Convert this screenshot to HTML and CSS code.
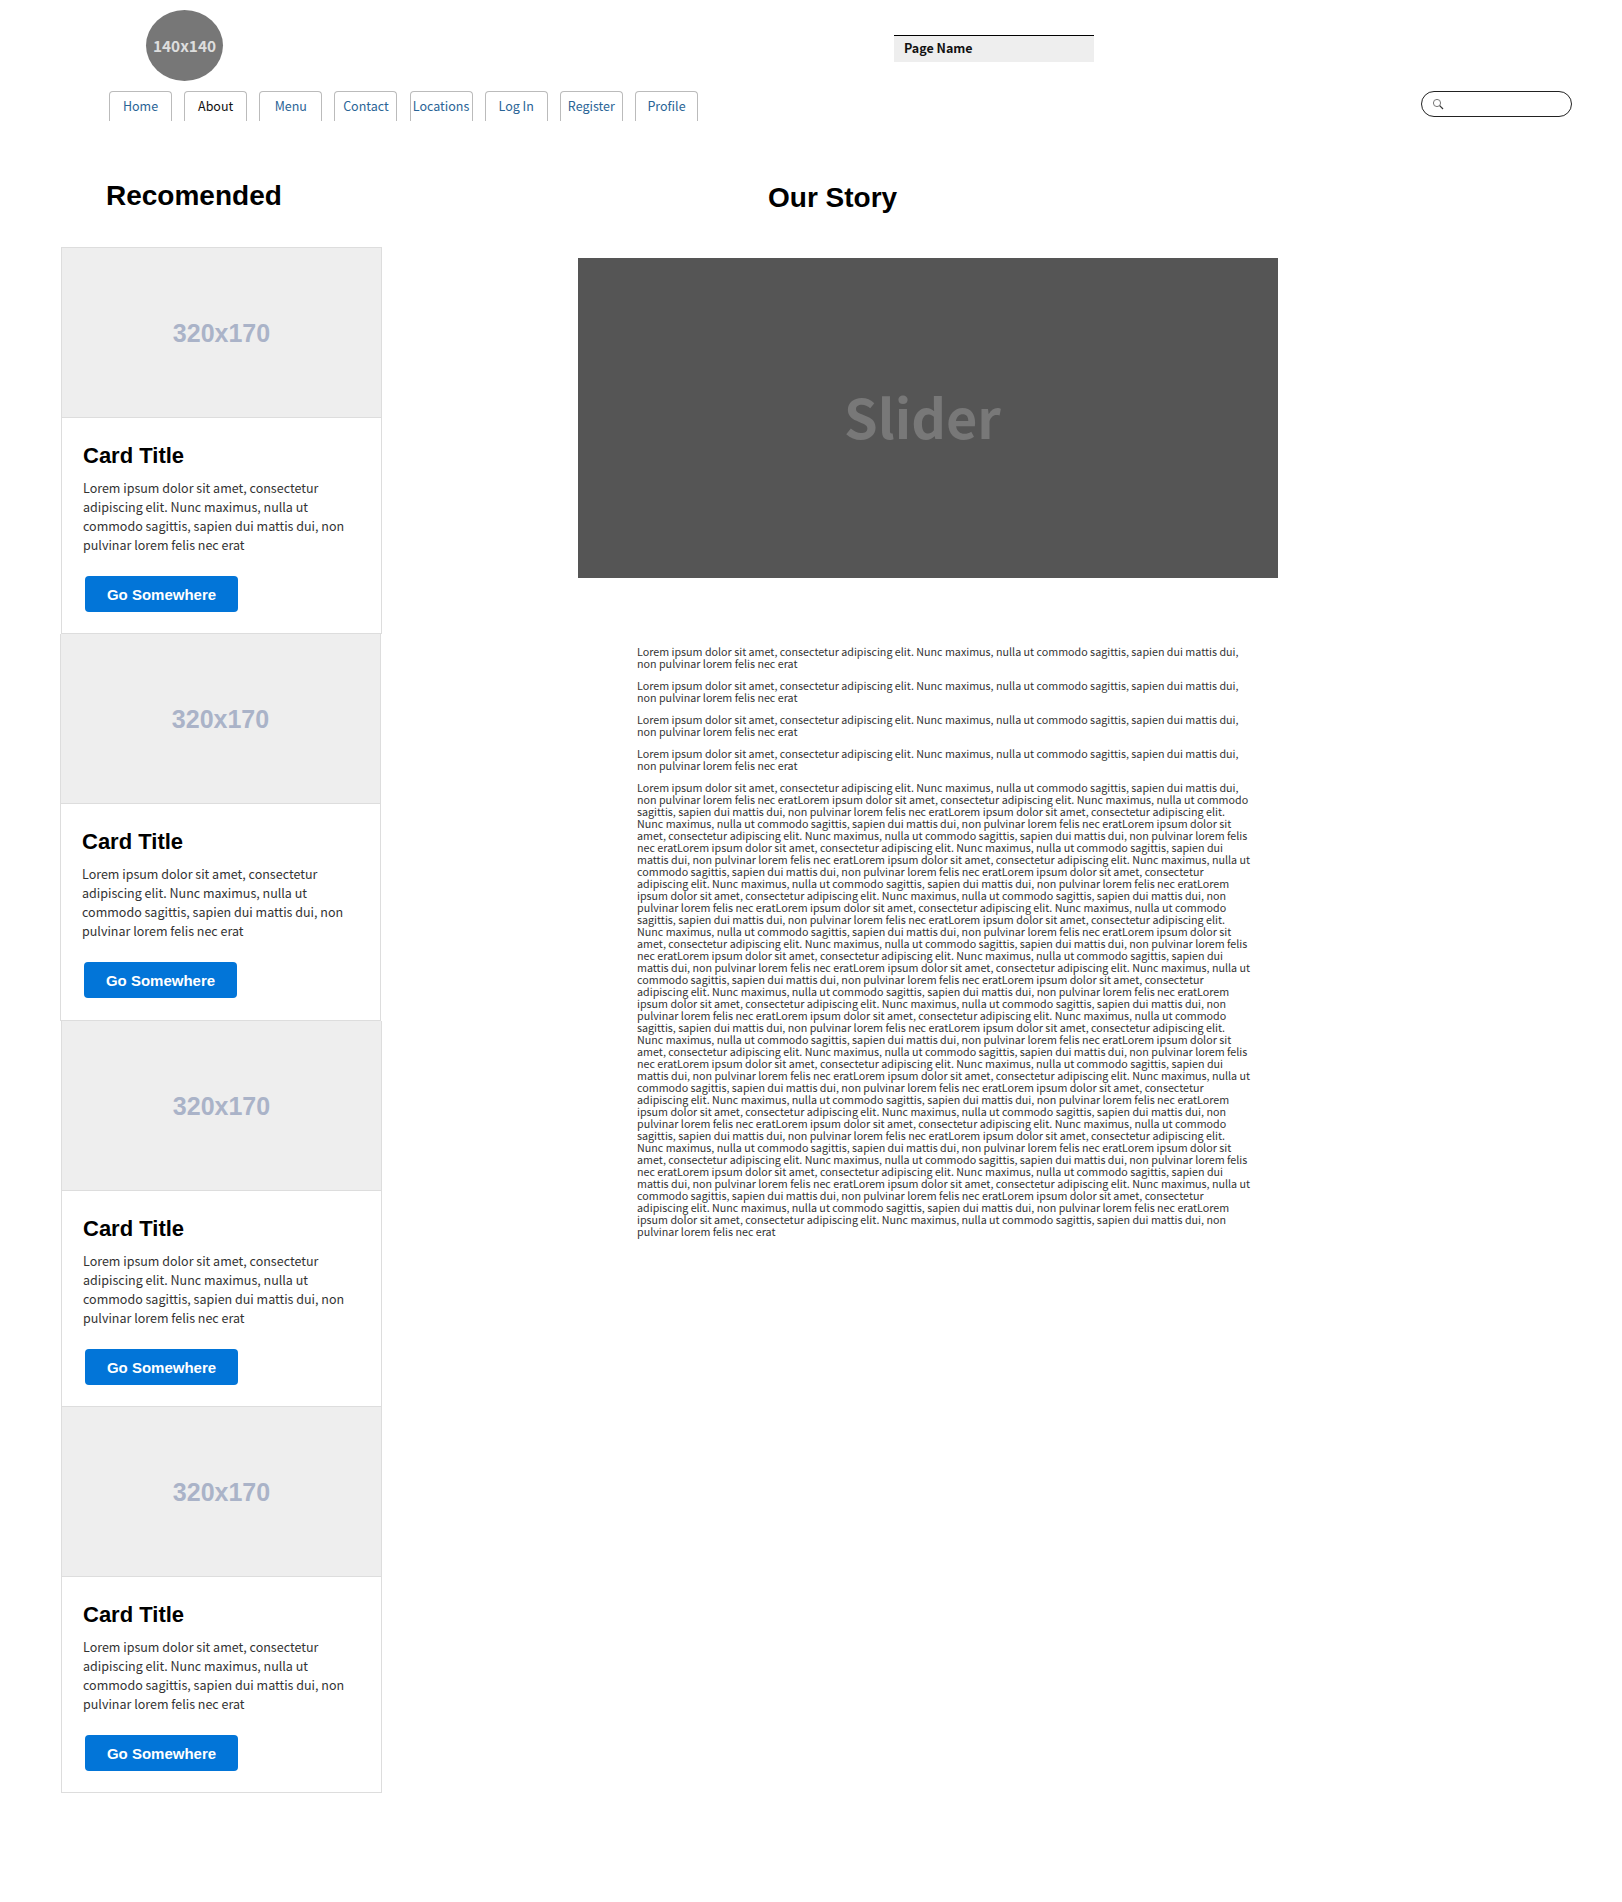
FILE: index.html
```html
<!DOCTYPE html>
<html lang="en">
<head>
  <meta charset="UTF-8" />
  <meta name="viewport" content="width=device-width, initial-scale=1.0"/>
  <title>Our Story</title>
  <link rel="stylesheet" href="styles.css">
</head>
<body>

  <div class="top-row">
    <div class="logo">140x140</div>
    <div class="page-name">Page Name</div>
  </div>

  <div class="nav-row">
    <ul class="tabs">
      <li><a href="#">Home</a></li>
      <li><a href="#" class="active">About</a></li>
      <li><a href="#">Menu</a></li>
      <li><a href="#">Contact</a></li>
      <li><a href="#">Locations</a></li>
      <li><a href="#">Log In</a></li>
      <li><a href="#">Register</a></li>
      <li><a href="#">Profile</a></li>
    </ul>
    <div class="search">
      <svg class="search-icon" width="12" height="12" viewBox="0 0 12 12">
        <circle cx="5" cy="5" r="3.6" fill="none" stroke="#777" stroke-width="1"/>
        <path d="M7.7 7.7 L11 11" stroke="#333" stroke-width="1.2" fill="none"/>
      </svg>
      <input type="text" />
    </div>
  </div>

  <div class="content">
    <div class="sidebar">
      <h2 class="side-title">Recomended</h2>

      <div class="card">
        <div class="card-img">320x170</div>
        <div class="card-body">
          <h4>Card Title</h4>
          <p>Lorem ipsum dolor sit amet, consectetur adipiscing elit. Nunc maximus, nulla ut commodo sagittis, sapien dui mattis dui, non pulvinar lorem felis nec erat</p>
          <a href="#" class="btn">Go Somewhere</a>
        </div>
      </div>

      <div class="card card-shift">
        <div class="card-img">320x170</div>
        <div class="card-body">
          <h4>Card Title</h4>
          <p>Lorem ipsum dolor sit amet, consectetur adipiscing elit. Nunc maximus, nulla ut commodo sagittis, sapien dui mattis dui, non pulvinar lorem felis nec erat</p>
          <a href="#" class="btn">Go Somewhere</a>
        </div>
      </div>

      <div class="card">
        <div class="card-img">320x170</div>
        <div class="card-body">
          <h4>Card Title</h4>
          <p>Lorem ipsum dolor sit amet, consectetur adipiscing elit. Nunc maximus, nulla ut commodo sagittis, sapien dui mattis dui, non pulvinar lorem felis nec erat</p>
          <a href="#" class="btn">Go Somewhere</a>
        </div>
      </div>

      <div class="card">
        <div class="card-img">320x170</div>
        <div class="card-body">
          <h4>Card Title</h4>
          <p>Lorem ipsum dolor sit amet, consectetur adipiscing elit. Nunc maximus, nulla ut commodo sagittis, sapien dui mattis dui, non pulvinar lorem felis nec erat</p>
          <a href="#" class="btn">Go Somewhere</a>
        </div>
      </div>
    </div>

    <div class="main">
      <h2 class="story-title">Our Story</h2>
      <div class="slider">Slider</div>
      <div class="story-text">
        <p>Lorem ipsum dolor sit amet, consectetur adipiscing elit. Nunc maximus, nulla ut commodo sagittis, sapien dui mattis dui, non pulvinar lorem felis nec erat</p>
        <p>Lorem ipsum dolor sit amet, consectetur adipiscing elit. Nunc maximus, nulla ut commodo sagittis, sapien dui mattis dui, non pulvinar lorem felis nec erat</p>
        <p>Lorem ipsum dolor sit amet, consectetur adipiscing elit. Nunc maximus, nulla ut commodo sagittis, sapien dui mattis dui, non pulvinar lorem felis nec erat</p>
        <p>Lorem ipsum dolor sit amet, consectetur adipiscing elit. Nunc maximus, nulla ut commodo sagittis, sapien dui mattis dui, non pulvinar lorem felis nec erat</p>
        <p>Lorem ipsum dolor sit amet, consectetur adipiscing elit. Nunc maximus, nulla ut commodo sagittis, sapien dui mattis dui, non pulvinar lorem felis nec eratLorem ipsum dolor sit amet, consectetur adipiscing elit. Nunc maximus, nulla ut commodo sagittis, sapien dui mattis dui, non pulvinar lorem felis nec eratLorem ipsum dolor sit amet, consectetur adipiscing elit. Nunc maximus, nulla ut commodo sagittis, sapien dui mattis dui, non pulvinar lorem felis nec eratLorem ipsum dolor sit amet, consectetur adipiscing elit. Nunc maximus, nulla ut commodo sagittis, sapien dui mattis dui, non pulvinar lorem felis nec eratLorem ipsum dolor sit amet, consectetur adipiscing elit. Nunc maximus, nulla ut commodo sagittis, sapien dui mattis dui, non pulvinar lorem felis nec eratLorem ipsum dolor sit amet, consectetur adipiscing elit. Nunc maximus, nulla ut commodo sagittis, sapien dui mattis dui, non pulvinar lorem felis nec eratLorem ipsum dolor sit amet, consectetur adipiscing elit. Nunc maximus, nulla ut commodo sagittis, sapien dui mattis dui, non pulvinar lorem felis nec eratLorem ipsum dolor sit amet, consectetur adipiscing elit. Nunc maximus, nulla ut commodo sagittis, sapien dui mattis dui, non pulvinar lorem felis nec eratLorem ipsum dolor sit amet, consectetur adipiscing elit. Nunc maximus, nulla ut commodo sagittis, sapien dui mattis dui, non pulvinar lorem felis nec eratLorem ipsum dolor sit amet, consectetur adipiscing elit. Nunc maximus, nulla ut commodo sagittis, sapien dui mattis dui, non pulvinar lorem felis nec eratLorem ipsum dolor sit amet, consectetur adipiscing elit. Nunc maximus, nulla ut commodo sagittis, sapien dui mattis dui, non pulvinar lorem felis nec eratLorem ipsum dolor sit amet, consectetur adipiscing elit. Nunc maximus, nulla ut commodo sagittis, sapien dui mattis dui, non pulvinar lorem felis nec eratLorem ipsum dolor sit amet, consectetur adipiscing elit. Nunc maximus, nulla ut commodo sagittis, sapien dui mattis dui, non pulvinar lorem felis nec eratLorem ipsum dolor sit amet, consectetur adipiscing elit. Nunc maximus, nulla ut commodo sagittis, sapien dui mattis dui, non pulvinar lorem felis nec eratLorem ipsum dolor sit amet, consectetur adipiscing elit. Nunc maximus, nulla ut commodo sagittis, sapien dui mattis dui, non pulvinar lorem felis nec eratLorem ipsum dolor sit amet, consectetur adipiscing elit. Nunc maximus, nulla ut commodo sagittis, sapien dui mattis dui, non pulvinar lorem felis nec eratLorem ipsum dolor sit amet, consectetur adipiscing elit. Nunc maximus, nulla ut commodo sagittis, sapien dui mattis dui, non pulvinar lorem felis nec eratLorem ipsum dolor sit amet, consectetur adipiscing elit. Nunc maximus, nulla ut commodo sagittis, sapien dui mattis dui, non pulvinar lorem felis nec eratLorem ipsum dolor sit amet, consectetur adipiscing elit. Nunc maximus, nulla ut commodo sagittis, sapien dui mattis dui, non pulvinar lorem felis nec eratLorem ipsum dolor sit amet, consectetur adipiscing elit. Nunc maximus, nulla ut commodo sagittis, sapien dui mattis dui, non pulvinar lorem felis nec eratLorem ipsum dolor sit amet, consectetur adipiscing elit. Nunc maximus, nulla ut commodo sagittis, sapien dui mattis dui, non pulvinar lorem felis nec eratLorem ipsum dolor sit amet, consectetur adipiscing elit. Nunc maximus, nulla ut commodo sagittis, sapien dui mattis dui, non pulvinar lorem felis nec eratLorem ipsum dolor sit amet, consectetur adipiscing elit. Nunc maximus, nulla ut commodo sagittis, sapien dui mattis dui, non pulvinar lorem felis nec eratLorem ipsum dolor sit amet, consectetur adipiscing elit. Nunc maximus, nulla ut commodo sagittis, sapien dui mattis dui, non pulvinar lorem felis nec eratLorem ipsum dolor sit amet, consectetur adipiscing elit. Nunc maximus, nulla ut commodo sagittis, sapien dui mattis dui, non pulvinar lorem felis nec eratLorem ipsum dolor sit amet, consectetur adipiscing elit. Nunc maximus, nulla ut commodo sagittis, sapien dui mattis dui, non pulvinar lorem felis nec eratLorem ipsum dolor sit amet, consectetur adipiscing elit. Nunc maximus, nulla ut commodo sagittis, sapien dui mattis dui, non pulvinar lorem felis nec eratLorem ipsum dolor sit amet, consectetur adipiscing elit. Nunc maximus, nulla ut commodo sagittis, sapien dui mattis dui, non pulvinar lorem felis nec eratLorem ipsum dolor sit amet, consectetur adipiscing elit. Nunc maximus, nulla ut commodo sagittis, sapien dui mattis dui, non pulvinar lorem felis nec erat</p>
      </div>
    </div>
  </div>

</body>
</html>
```

FILE: styles.css
```css
* {
  box-sizing: border-box;
}

body {
  margin: 0;
  background-color: #fff;
  color: #333;
  font-family: "Noto Sans CJK SC", "Noto Sans", sans-serif;
}

.top-row {
  display: flex;
  align-items: flex-start;
  height: 91px;
  padding: 10px 0 0 146px;
}

.logo {
  width: 77px;
  height: 71px;
  padding-bottom: 2px;
  border-radius: 50%;
  background-color: #777;
  color: #ddd;
  font-size: 15.4px;
  font-weight: 700;
  display: flex;
  align-items: center;
  justify-content: center;
}

.page-name {
  width: 200px;
  height: 27px;
  margin: 25px 0 0 671px;
  padding-left: 10px;
  border-top: 1px solid #000;
  background-color: #eee;
  color: #111;
  font-size: 12.5px;
  font-weight: 700;
  line-height: 23px;
}

.nav-row {
  display: flex;
  align-items: flex-start;
  justify-content: space-between;
  height: 30px;
  padding: 0 50px 0 109px;
}

.tabs {
  display: flex;
  gap: 12.15px;
  margin: 0;
  padding: 0;
  list-style: none;
}

.tabs a {
  display: block;
  width: 63px;
  height: 30px;
  border: 1px solid #bbb;
  border-bottom: none;
  border-radius: 4px 4px 0 0;
  color: #2a6496;
  font-size: 12.5px;
  line-height: 28px;
  text-align: center;
  text-decoration: none;
}

.tabs a.active {
  color: #111;
}

.search {
  display: flex;
  align-items: center;
  width: 151px;
  height: 26px;
  padding-left: 10px;
  border: 1px solid #222;
  border-radius: 13px;
}

.search input {
  flex: 1;
  min-width: 0;
  border: none;
  outline: none;
  background: transparent;
}

.content {
  display: flex;
  align-items: flex-start;
}

.sidebar {
  width: 382px;
  margin-left: 61px;
  flex-shrink: 0;
}

.side-title {
  margin: 59px 0 35px 45px;
  color: #000;
  font-family: "Liberation Sans", Arial, sans-serif;
  font-size: 28px;
  font-weight: 700;
  line-height: 32px;
}

.card {
  width: 321px;
  border: 1px solid #ddd;
}

.card + .card {
  border-top: none;
}

.card-shift {
  margin-left: -1px;
}

.card-img {
  height: 170px;
  padding-top: 2px;
  background-color: #eee;
  border-bottom: 1px solid #ddd;
  color: #aab3c8;
  font-family: "Liberation Sans", Arial, sans-serif;
  font-size: 25px;
  font-weight: 700;
  display: flex;
  align-items: center;
  justify-content: center;
}

.card-body {
  padding: 25px 21px 21.25px;
}

.card-body h4 {
  margin: 0 0 9px;
  color: #000;
  font-family: "Liberation Sans", Arial, sans-serif;
  font-size: 22px;
  font-weight: 700;
  line-height: 26px;
}

.card-body p {
  margin: 0 0 22px;
  color: #333;
  font-size: 12.5px;
  line-height: 19px;
}

.btn {
  display: block;
  width: 153px;
  height: 36px;
  margin-left: 2px;
  border-radius: 4px;
  background-color: #0275d8;
  color: #fff;
  font-family: "Liberation Sans", Arial, sans-serif;
  font-size: 15px;
  font-weight: 700;
  line-height: 37px;
  text-align: center;
  text-decoration: none;
}

.main {
  width: 700px;
  margin-left: 135px;
  flex-shrink: 0;
}

.story-title {
  margin: 61px 0 44px 190px;
  color: #000;
  font-family: "Liberation Sans", Arial, sans-serif;
  font-size: 28px;
  font-weight: 700;
  line-height: 32px;
}

.slider {
  height: 320px;
  padding: 0 11px 5px 0;
  background-color: #555;
  color: #787878;
  font-size: 54px;
  font-weight: 700;
  display: flex;
  align-items: center;
  justify-content: center;
}

.story-text {
  width: 615px;
  margin: 68px 0 0 59px;
  color: #333;
  font-size: 10.73px;
  line-height: 12px;
}

.story-text p {
  margin: 0 0 10px;
}
```
